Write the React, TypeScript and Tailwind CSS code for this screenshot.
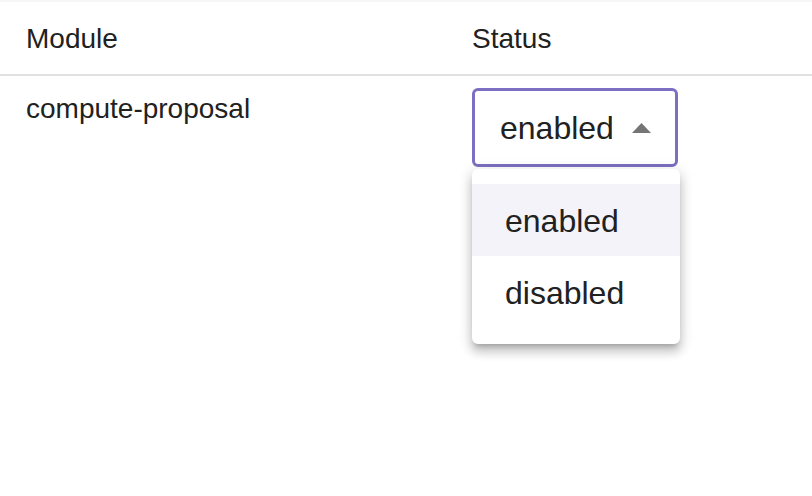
import { useState } from 'react'

const options = ['enabled', 'disabled']

export default function App() {
  const [value] = useState('enabled')

  return (
    <div className="h-[496px] w-[812px] overflow-hidden bg-white border-t-2 border-[#f6f6f6] font-['Liberation_Sans',Arial,sans-serif] text-[#212121]">
      {/* header */}
      <div className="grid h-[74px] grid-cols-[472px_1fr] border-b-2 border-[#e0e0e0] pt-[21px] text-[28px] leading-[32px]">
        <div className="pl-[26px]">Module</div>
        <div>Status</div>
      </div>

      {/* row */}
      <div className="grid grid-cols-[472px_1fr]">
        <div className="pl-[26px] pt-[17px] text-[28px] leading-[32px]">compute-proposal</div>
        <div className="pt-[12px]">
          <div className="relative w-[206px]">
            <div className="flex h-[79px] items-center justify-between rounded-[6px] border-[3px] border-[#7d6fc1] pl-[25px] pr-[24px] text-[32px] leading-[36px]">
              <span className="pt-px">{value}</span>
              <svg width="19" height="10" viewBox="0 0 19 10" aria-hidden="true">
                <path d="M0 10 L9.5 0 L19 10 Z" fill="#757575" />
              </svg>
            </div>

            <div className="absolute left-0 top-[81px] w-[208px] rounded-[6px] bg-white pt-[15px] pb-[16px] shadow-[0px_5px_5px_-3px_rgba(0,0,0,0.2),0px_8px_10px_1px_rgba(0,0,0,0.14),0px_3px_14px_2px_rgba(0,0,0,0.12)]">
              {options.map((opt) => (
                <div
                  key={opt}
                  className={`flex h-[72px] items-center pl-[33px] pt-px text-[32px] leading-[36px] ${
                    opt === value ? 'bg-[#f4f3f9]' : ''
                  }`}
                >
                  {opt}
                </div>
              ))}
            </div>
          </div>
        </div>
      </div>
    </div>
  )
}
